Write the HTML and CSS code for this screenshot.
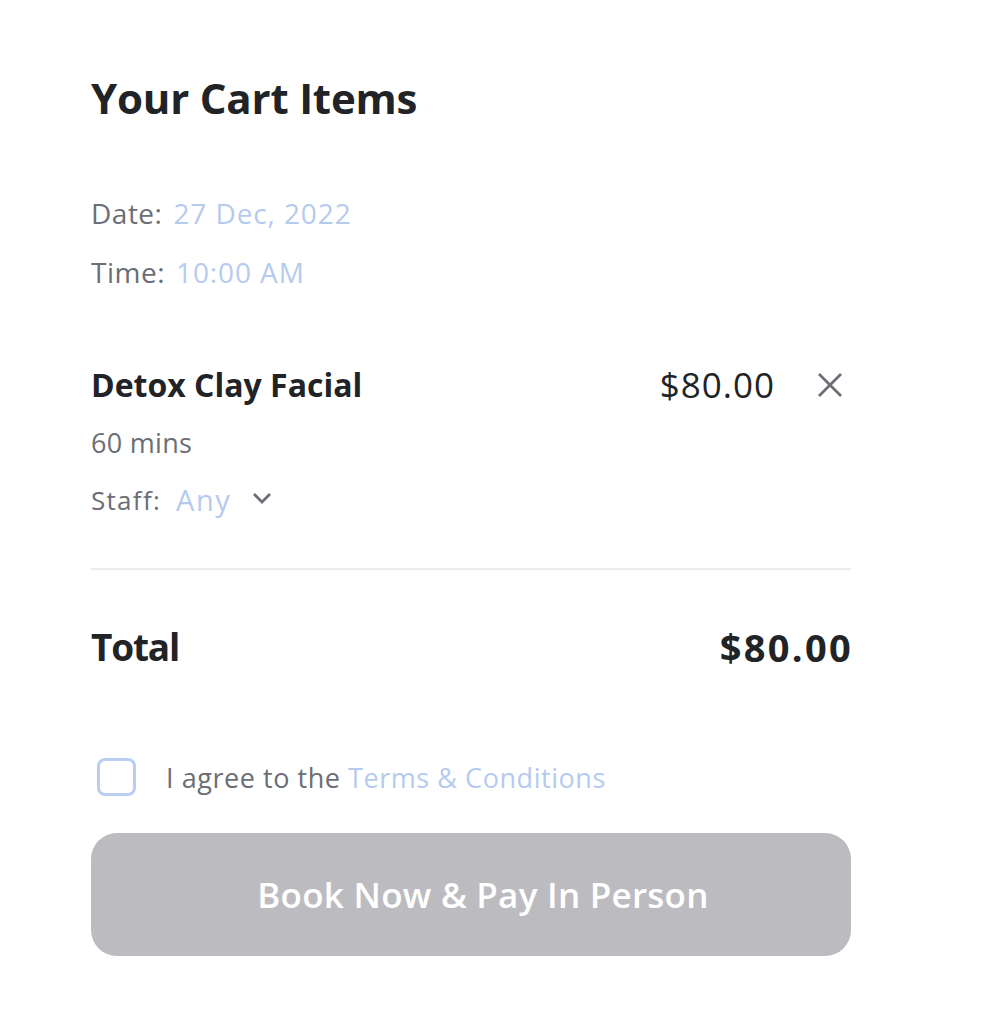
FILE: index.html
```html
<!DOCTYPE html>
<html>
<head>
<meta charset="utf-8">
<link rel="stylesheet" href="styles.css">
</head>
<body>
<main class="cart">
  <h1 class="title">Your Cart Items</h1>
  <section class="meta">
    <div class="meta-row"><span class="label">Date:</span><span class="value">27 Dec, 2022</span></div>
    <div class="meta-row time"><span class="label">Time:</span><span class="value">10:00 AM</span></div>
  </section>
  <section class="item">
    <div class="item-head">
      <span class="item-name">Detox Clay Facial</span>
      <div class="item-right">
        <span class="item-price">$80.00</span>
        <svg class="remove" width="26" height="26" viewBox="0 0 26 26"><path d="M2 2 L24 24 M24 2 L2 24" stroke="#6b6e75" stroke-width="2.8" fill="none"/></svg>
      </div>
    </div>
    <div class="item-duration">60 mins</div>
    <div class="item-staff"><span class="label small">Staff:</span><span class="value staff">Any</span>
      <svg class="chev" width="20" height="12" viewBox="0 0 20 12"><path d="M2 2 L10 10 L18 2" stroke="#6b6e75" stroke-width="2.8" fill="none"/></svg>
    </div>
  </section>
  <hr class="divider">
  <section class="total">
    <span class="total-label">Total</span><span class="total-price">$80.00</span>
  </section>
  <label class="agree">
    <span class="box"></span>
    <span class="agree-text">I agree to the <span class="link">Terms &amp; Conditions</span></span>
  </label>
  <button class="book">Book Now &amp; Pay In Person</button>
</main>
</body>
</html>
```
FILE: styles.css
```css
* { box-sizing: border-box; }
body {
  margin: 0;
  background: #fff;
  font-family: "Open Sans", "Liberation Sans", sans-serif;
  color: #222326;
}
.cart {
  width: 760px;
  margin-left: 91px;
  padding-top: 74px;
}
.title {
  margin: 0;
  font-size: 42px;
  line-height: 48px;
  font-weight: 700;
  letter-spacing: -0.2px;
}
.meta { margin-top: 71px; }
.meta-row {
  display: flex;
  gap: 11px;
  font-size: 28px;
  line-height: 40px;
}
.meta-row.time { margin-top: 19px; }
.label { color: #6b6e75; letter-spacing: 0.5px; }
.value { color: #b5cbee; letter-spacing: 0.9px; }
.item { margin-top: 73px; }
.item-head {
  display: flex;
  justify-content: space-between;
  align-items: center;
  line-height: 40px;
}
.item-name { font-size: 32px; font-weight: 700; letter-spacing: 0; }
.item-right { display: flex; align-items: center; gap: 44px; margin-right: 8px; }
.item-price { font-size: 35px; letter-spacing: 1px; margin-right: -2px; }
.remove { display: block; }
.item-duration {
  margin-top: 18px;
  font-size: 27px;
  line-height: 40px;
  color: #6b6e75;
  letter-spacing: 0.3px;
}
.item-staff {
  margin-top: 17px;
  display: flex;
  align-items: center;
  font-size: 26px;
  line-height: 40px;
}
.label.small { font-size: 26px; margin-right: 15px; letter-spacing: 1.3px; }
.value.staff { font-size: 29px; letter-spacing: 1.5px; }
.chev { margin-left: 21px; margin-top: -4px; }
.divider {
  margin: 48px 0 0;
  border: 0;
  height: 2px;
  background: #ededee;
}
.total {
  margin-top: 55px;
  display: flex;
  justify-content: space-between;
  font-size: 38px;
  line-height: 44px;
  font-weight: 700;
}
.total-label { font-size: 37px; letter-spacing: -1.2px; }
.total-price { letter-spacing: 2.3px; margin-right: -2px; }
.agree {
  margin-top: 88px;
  display: flex;
  align-items: center;
  height: 40px;
}
.box {
  width: 39px;
  height: 38px;
  margin-left: 6px;
  border: 3px solid #b9cff2;
  border-radius: 8px;
}
.agree-text {
  margin-left: 30px;
  font-size: 27px;
  color: #6b6e75;
  letter-spacing: 0.55px;
}
.link { color: #b5cbee; }
.book {
  display: block;
  margin-top: 36px;
  width: 760px;
  height: 123px;
  padding: 0 0 0 24px;
  border: 0;
  border-radius: 26px;
  background: #bcbcc0;
  color: #fff;
  font-family: inherit;
  font-size: 35px;
  font-weight: 600;
  letter-spacing: 0.25px;
}
```
